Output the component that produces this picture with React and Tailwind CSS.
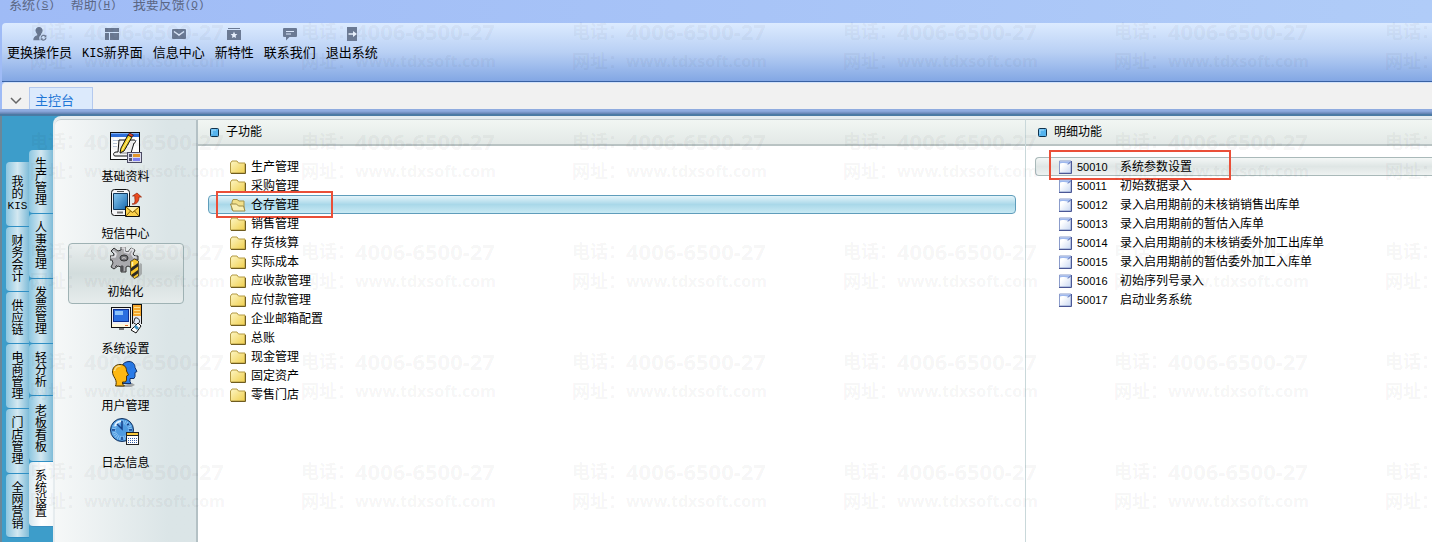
import { useState } from 'react'
import clsx from 'clsx'

const menus = [
  { label: '系统', hotkey: 'S' },
  { label: '帮助', hotkey: 'H' },
  { label: '我要反馈', hotkey: 'Q' },
]

const tools = [
  { label: '更换操作员', icon: UserIcon },
  { latin: 'KIS', label: '新界面', icon: LayoutIcon },
  { label: '信息中心', icon: MailIcon },
  { label: '新特性', icon: StarIcon },
  { label: '联系我们', icon: ChatIcon },
  { label: '退出系统', icon: ExitIcon },
]

const outerTabs = [
  { lines: ['我', '的', 'KIS'], size: 'h-[65px]' },
  { lines: [...'财务会计'], size: 'h-[65px]' },
  { lines: [...'供应链'], size: 'h-[52px]' },
  { lines: [...'电商管理'], size: 'h-[65px]' },
  { lines: [...'门店管理'], size: 'h-[65px]' },
  { lines: [...'全网营销'], size: 'h-[64px]' },
]

const innerTabs = [
  { lines: [...'生产管理'], size: 'h-[64px]' },
  { lines: [...'人事管理'], size: 'h-[65px]' },
  { lines: [...'发票管理'], size: 'h-[65px]' },
  { lines: [...'轻分析'], size: 'h-[52px]' },
  { lines: [...'老板看板'], size: 'h-[66px]' },
  { lines: [...'系统设置'], size: 'h-[65px]', active: true },
]

const modules = [
  { label: '基础资料', icon: MasterDataIcon },
  { label: '短信中心', icon: SmsIcon },
  { label: '初始化', icon: GearIcon },
  { label: '系统设置', icon: ComputerIcon },
  { label: '用户管理', icon: HeadsIcon },
  { label: '日志信息', icon: ClockIcon },
]

const subFunctions = [
  '生产管理',
  '采购管理',
  '仓存管理',
  '销售管理',
  '存货核算',
  '实际成本',
  '应收款管理',
  '应付款管理',
  '企业邮箱配置',
  '总账',
  '现金管理',
  '固定资产',
  '零售门店',
]

const details = [
  ['50010', '系统参数设置'],
  ['50011', '初始数据录入'],
  ['50012', '录入启用期前的未核销销售出库单'],
  ['50013', '录入启用期前的暂估入库单'],
  ['50014', '录入启用期前的未核销委外加工出库单'],
  ['50015', '录入启用期前的暂估委外加工入库单'],
  ['50016', '初始序列号录入'],
  ['50017', '启动业务系统'],
]

/* toolbar icons */

function UserIcon() {
  return (
    <svg width="14" height="14" viewBox="0 0 14 14" fill="#6b7a94">
      <path d="M6 0c2.200 0 3.600 1.500 3.600 3.600 0 1.500-.7 2.700-1.600 3.400v1c-1.300.7-2 2-1.800 3.600.1.7.3 1.100.6 1.600H.3c0-2.600 1-4 3.900-5v-1.200C3.300 6.300 2.500 5 2.500 3.600 2.500 1.500 3.900 0 6 0z" />
      <path d="M8.100 10.600a2.600 2.600 0 0 1 4.600-1.300M13 10.800a2.600 2.600 0 0 1-4.600 1.400" fill="none" stroke="#6b7a94" strokeWidth="1.200" />
      <path d="M13.300 7.800v2.400h-2.300zM7.700 13.600v-2.400H10z" />
    </svg>
  )
}

function LayoutIcon() {
  return (
    <svg width="14" height="14" viewBox="0 0 14 14" fill="#6b7a94" shapeRendering="crispEdges">
      <path d="M0 1h14v4H0zM0 6h4v7H0zM5 6h9v7H5z" />
    </svg>
  )
}

function MailIcon() {
  return (
    <svg width="14" height="14" viewBox="0 0 14 14">
      <rect y="2" width="14" height="10" rx="1" fill="#6b7a94" />
      <path d="M2 4.500l5 3.500 5-3.500" fill="none" stroke="#dce8fb" strokeWidth="1.500" />
    </svg>
  )
}

function StarIcon() {
  return (
    <svg width="14" height="14" viewBox="0 0 14 14">
      <path d="M1 1h12v1H1zM0 3h14v10H0z" fill="#6b7a94" />
      <path d="M7 4.600l1 2.300 2.400.2-1.800 1.600.5 2.400L7 9.900l-2.100 1.200.5-2.400-1.800-1.600 2.400-.2z" fill="#e6effc" />
    </svg>
  )
}

function ChatIcon() {
  return (
    <svg width="14" height="14" viewBox="0 0 14 14">
      <path d="M1 1h12a1 1 0 0 1 1 1v7a1 1 0 0 1-1 1H6.500L3 13.500V10H1a1 1 0 0 1-1-1V2a1 1 0 0 1 1-1z" fill="#6b7a94" />
      <path d="M3 4.500h8M3 7h5" stroke="#dce8fb" strokeWidth="1" />
    </svg>
  )
}

function ExitIcon() {
  return (
    <svg width="14" height="14" viewBox="0 0 14 14">
      <path d="M2 0h10v14H2z" fill="#6b7a94" />
      <path d="M3.500 6.300H8V4l4 3-4 3V7.700H3.500z" fill="#e6effc" />
    </svg>
  )
}

/* module icons */

function MasterDataIcon() {
  return (
    <svg width="32" height="32" viewBox="0 0 32 32">
      <g shapeRendering="crispEdges">
        <path d="M0 0h30v28H0z" fill="#111" />
        <path d="M1 1h28v4H1z" fill="#2f6fd8" />
        <path d="M1 1h28v1H1z" fill="#7eb0f3" />
        <path d="M1 5h28v22H1z" fill="#fff" />
        <path d="M3 8h24M3 11h4M3 14h4" stroke="#b9c4d6" />
      </g>
      <path d="M9 8h15c2 0 2 3 0 3l-3 10c0 2-2 3-4 3H5c-2 0-2-4 1-4h2z" fill="#f3f3f3" stroke="#111" />
      <path d="M13 12h6M12 15h5M10 21h8" stroke="#888" />
      <path d="M18 3l4 2-8 14-4 2 1-5z" fill="#f9d51c" stroke="#111" />
      <path d="M18 3l1.500-2 4 2L22 5z" fill="#e2402e" stroke="#111" strokeWidth=".6" />
      <path d="M19.500 5.500L12 18" stroke="#fff3a0" />
      <g shapeRendering="crispEdges">
        <path d="M17 20h15v11H17z" fill="#4b4b63" />
        <path d="M18 21h13v9H18z" fill="#dcdcec" />
        <path d="M19 22h3v3h-3zM19 26h3v3h-3z" fill="#55566e" />
        <path d="M23 22h7v3h-7z" fill="#e3962b" />
        <path d="M23 26h7v3h-7z" fill="#7f7ff0" />
      </g>
    </svg>
  )
}

function SmsIcon() {
  return (
    <svg width="32" height="32" viewBox="0 0 32 32">
      <defs>
        <linearGradient id="screen" x1="0" y1="0" x2="1" y2="1">
          <stop offset="0" stopColor="#8ccbf2" />
          <stop offset="1" stopColor="#1667ac" />
        </linearGradient>
      </defs>
      <rect x="1.500" y=".5" width="18" height="26" rx="3" fill="#f4f5f7" stroke="#111" />
      <path d="M7 2.500h7" stroke="#555" />
      <path d="M3.500 4.500h14v16h-14z" fill="url(#screen)" stroke="#123a5e" />
      <path d="M7 23.500h6" stroke="#777" strokeWidth="2" />
      <path d="M22 15c5 0 2-6 3-8h-2.500L27 4l4.500 4H29c0 4-2 8-7 7z" fill="#ea4a1e" stroke="#8f2209" strokeWidth=".7" />
      <path d="M15.500 17.500h14v10h-14z" fill="#fbd24b" stroke="#111" />
      <path d="M16 18l6.500 5.500L29 18M16 27l4.500-5M29 27l-4.500-5" fill="none" stroke="#7b5b09" />
      <path d="M17 18h11l-5.500 4.500z" fill="#fff2b0" />
    </svg>
  )
}

function GearIcon() {
  return (
    <svg width="32" height="32" viewBox="0 0 32 32">
      <path
        d="M11 0h4v4l3 1 3-4 4 2-2 4 2 2h3v4h-4l-1 3 2 3-3 2-4-2-2 1v5h-5v-5l-3-1-4 3-3-2 2-4-1-3H0V9h3l1-2-3-3 3-3 4 3 3-1z"
        fill="#aaaaae"
        stroke="#333"
      />
      <path d="M11.500 1h3v4l4 1 3-4 2 1-2 4 2 3h3M1 10h4l1-3-3-3" fill="none" stroke="#e4e4e8" strokeWidth="1.500" />
      <path d="M11 19h2v5h-2zM5 20l2-2" fill="#58585c" stroke="#4c4c50" />
      <ellipse cx="14" cy="11" rx="4" ry="3" fill="#77777c" stroke="#333" />
      <path d="M12 11.500c1-1 3-1 4 0" stroke="#ddd" fill="none" />
      <path d="M24 31l6-15 2 1v10l-4 4z" fill="#777" opacity=".5" />
      <path d="M20.500 14.500l4-2.500 4 2V29l-4 2.500-4-3.500z" fill="#f7c62d" stroke="#3c3315" strokeWidth=".8" />
      <path d="M21 21l7-5v3.500l-7 5zM21 28l7-5v3.500l-5 3.500z" fill="#2c2a25" />
      <path d="M22.500 15v4" stroke="#fff3b5" strokeWidth="1.500" />
    </svg>
  )
}

function ComputerIcon() {
  return (
    <svg width="32" height="32" viewBox="0 0 32 32">
      <g shapeRendering="crispEdges">
        <path d="M22 0h10v20H22z" fill="#111" />
        <path d="M23 1h8v11h-8z" fill="#f5a82d" />
        <path d="M24 3h6M24 6h6M24 9h6" stroke="#ffe08a" strokeWidth="1" />
        <path d="M23 12h8v8h-8z" fill="#e6e8ee" />
        <path d="M1 3h20v21H1z" fill="#111" />
        <path d="M2 4h18v16H2z" fill="#f0f1f4" />
        <path d="M3 5h16v13H3z" fill="#0d2f91" />
        <path d="M4 6h14v11H4z" fill="#2b6fe0" />
        <path d="M5 7h8v4H5z" fill="#8cc2fb" />
        <path d="M2 20h18v3H2z" fill="#fff8dc" />
        <path d="M15 21h3v1h-3z" fill="#e2682c" />
        <path d="M9 24h5v2H9z" fill="#777" />
      </g>
      <path d="M25 14a3.500 3.500 0 0 1 4.500 4l-2 3-4-2z" fill="#dfeaf8" stroke="#333" />
      <path d="M28 19l3 3-5 7-5-3z" fill="#fff" stroke="#111" />
      <path d="M26 21l3 3-2 2-3-3z" fill="#3a8fc0" />
    </svg>
  )
}

function HeadsIcon() {
  return (
    <svg width="32" height="32" viewBox="0 0 32 32">
      <path d="M6 26h15l4-2-3-2" fill="#777" opacity=".6" />
      <path d="M12 5c1-3 4-4.500 7-4.500 4 0 6 3 6 6l2 4-2 1v4l-1 2h-4v3l1 2h-9z" fill="#2a7be8" stroke="#10336f" />
      <path d="M2.500 11c0-4.500 3-7.500 7.500-7.500s6.500 2.500 6.500 6.500l2 4-2 1v4l-1 2h-3v2l2 2H5.500c1-2 1-5-.5-7.500S2.500 13 2.500 11z" fill="#fdb813" stroke="#4a3404" />
      <path d="M4.500 10c.5-3 2.500-5 6-5" stroke="#ffe08a" fill="none" strokeWidth="1.500" />
    </svg>
  )
}

function ClockIcon() {
  return (
    <svg width="32" height="32" viewBox="0 0 32 32">
      <circle cx="12" cy="12" r="11.500" fill="#4f9be0" stroke="#12305c" />
      <circle cx="12" cy="12" r="8" fill="none" stroke="#8cc4f3" strokeWidth="4" strokeDasharray="1 1" />
      <path d="M5 8c1-3 3-4.500 6-5" stroke="#e3f2ff" strokeWidth="2" fill="none" />
      <path d="M12 3v8L7 6M2 12h3M19 12h3M12 19v3M17 7l2-1" stroke="#15408a" strokeWidth="1.500" fill="none" />
      <g shapeRendering="crispEdges">
        <path d="M16 14h13v13H16z" fill="#222" />
        <path d="M17 15h11v2H17z" fill="#f8c83c" />
        <path d="M17 18h11v8H17z" fill="#fff" />
        <path d="M18 20h9M18 22h9M18 24h9" stroke="#345ea6" strokeDasharray="1 1" />
      </g>
    </svg>
  )
}

function FolderIcon({ open }) {
  if (open) {
    return (
      <svg width="16" height="14" viewBox="0 0 16 14">
        <path d="M2 12V4l1-2.500h4L9 3h5v9z" fill="#f1e08a" stroke="#a3934a" />
        <path d="M.5 6h6l2 2h5l1.500 5H3z" fill="#f8efb4" stroke="#9a8a45" />
      </svg>
    )
  }
  return (
    <svg width="16" height="14" viewBox="0 0 16 14">
      <defs>
        <linearGradient id="folder" x1="0" y1="0" x2="1" y2="1">
          <stop offset="0" stopColor="#fdf6c4" />
          <stop offset="1" stopColor="#f0cf4e" />
        </linearGradient>
      </defs>
      <path d="M.5 13V3L2 1h5l1.500 2H15v10z" fill="url(#folder)" stroke="#b39a45" />
      <path d="M15.500 4v9.500H1" fill="none" stroke="#6f5c20" />
    </svg>
  )
}

function DocIcon() {
  return (
    <svg width="13" height="14" viewBox="0 0 13 14">
      <defs>
        <linearGradient id="doc" x1="0" y1="0" x2="1" y2="1">
          <stop offset=".3" stopColor="#fff" />
          <stop offset="1" stopColor="#c9d8f2" />
        </linearGradient>
      </defs>
      <path d="M.5 1h11.500v12H.5z" fill="url(#doc)" stroke="#8b9ccb" />
      <path d="M1 1.500h11L9.500 4C7 2.800 4 2.800 1 3.500z" fill="#9db8ee" />
      <path d="M12.500 1v12.500H0" fill="none" stroke="#4a5795" />
      <path d="M12 1.500L9 4.500" stroke="#4a5fa8" />
    </svg>
  )
}

function Marker() {
  return (
    <svg width="9" height="9" viewBox="0 0 9 9">
      <rect x=".5" y=".5" width="8" height="8" rx="1" fill="#56b4ee" stroke="#10324c" />
      <path d="M2 6V2h4" fill="none" stroke="#a5dcfb" />
    </svg>
  )
}

function VerticalTab({ lines, size, active }) {
  return (
    <button
      className={clsx(
        'flex w-full flex-col items-center justify-center rounded-l border-b text-xs leading-[12px]',
        size,
        active
          ? 'border-[#3a8fc0] bg-linear-to-r from-[#d5e6ee] via-white to-[#f6f9fa]'
          : 'border-[#2f8fc4] bg-linear-to-r from-[#8cc6e0] via-[#d3e8f1] to-[#7fbcd8]',
      )}
    >
      {lines.map((line, i) => (
        <span key={i} className={line.length > 1 ? "font-['Liberation_Mono',monospace] text-[11px]" : undefined}>
          {line}
        </span>
      ))}
    </button>
  )
}

function PanelHeader({ children }) {
  return (
    <h2 className="flex h-[26px] items-center gap-[7px] border-b-2 border-[#b9c3c3] bg-linear-to-b from-[#f1f6f3] to-[#e3e9e7] pl-3 text-xs">
      <Marker />
      {children}
    </h2>
  )
}

function Watermark() {
  return (
    <div
      aria-hidden="true"
      className="pointer-events-none absolute inset-x-0 top-[16px] bottom-0 overflow-hidden pl-[30px] font-['Noto_Sans','Noto_Sans_CJK_SC',sans-serif] font-bold text-black/5"
    >
      {[0, 1, 2, 3, 4].map((row) => (
        <div key={row} className="flex h-[110px] w-max">
          {[0, 1, 2, 3, 4, 5].map((col) => (
            <div key={col} className="w-[271px] text-lg leading-[30px] whitespace-nowrap">
              <p className="flex">
                <span className="w-[54px]">电话：</span>
                <span className="text-[22px]">4006-6500-27</span>
              </p>
              <p className="flex">
                <span className="w-[54px]">网址：</span>
                <span className="text-base leading-[30px]">www.tdxsoft.com</span>
              </p>
            </div>
          ))}
        </div>
      ))}
    </div>
  )
}

export default function App() {
  const [module, setModule] = useState('初始化')
  const [sub, setSub] = useState('仓存管理')
  const [detail, setDetail] = useState('50010')

  return (
    <div className="relative flex min-h-screen flex-col overflow-hidden bg-linear-to-r from-[#9fbbf6] to-[#b0ccf8] font-['Liberation_Sans','Noto_Sans_CJK_SC',sans-serif] text-xs text-black">
      <nav className="flex h-[23px] items-start gap-4 pl-[9px] text-[13px] leading-[10px] text-[#5b6785]">
        {menus.map((menu) => (
          <button key={menu.label} className="flex">
            {menu.label}
            <span className="font-['Liberation_Mono',monospace] text-[11px]">
              (<u>{menu.hotkey}</u>)
            </span>
          </button>
        ))}
      </nav>

      <div className="ml-[2px] flex h-[59px] items-start gap-[10px] rounded-tl border-b border-[#3a62a3] bg-linear-to-b from-[#dcebff] via-[#b9d0f4] to-[#83a7e4] pt-1 pl-[5px]">
        {tools.map(({ latin, label, icon: Icon }) => (
          <button key={label} className="flex flex-col items-center gap-1 text-[13px] leading-[16px]">
            <Icon />
            <span>
              {latin && <span className="font-['Liberation_Mono',monospace] text-xs">{latin}</span>}
              {label}
            </span>
          </button>
        ))}
      </div>

      <div className="ml-[2px] flex h-[27px] items-end rounded-tl border-t border-[#d3e3fc] bg-[#f1f1f1]">
        <button aria-label="展开" className="flex h-[21px] w-[27px] items-center justify-center pt-1">
          <svg width="12" height="8" viewBox="0 0 12 8">
            <path d="M1 1l5 5 5-5" fill="none" stroke="#666" strokeWidth="1.500" />
          </svg>
        </button>
        <button className="flex h-[22px] w-16 items-center border border-b-0 border-[#b4c9ee] bg-[#dceafc] pt-1 pl-[5px] text-[13px] leading-[16px] text-[#1f76d6]">
          主控台
        </button>
      </div>
      <div className="h-[7px] border-b-2 border-[#4b7aa4] bg-linear-to-b from-[#8fabdf] from-40% to-[#5f7fae]" />

      <main className="flex flex-1 border-l-2 border-[#6b8799] bg-[#3d9dca]">
        <div className="mt-[46px] ml-1 w-[23px] shrink-0 pb-1">
          {outerTabs.map((tab) => (
            <VerticalTab key={tab.lines.join('')} {...tab} />
          ))}
        </div>
        <div className="mt-[34px] w-6 shrink-0">
          {innerTabs.map((tab) => (
            <VerticalTab key={tab.lines.join('')} {...tab} />
          ))}
        </div>

        <div className="flex min-w-0 flex-1 rounded-tl-lg border-t-[3px] border-l-2 border-[#e6ecef] bg-white">
          <aside className="flex w-[143px] shrink-0 flex-col items-center rounded-tl-md border-t border-r-2 border-t-[#c5cdd0] border-r-[#b4c1c5] bg-linear-to-r from-[#f6f8f8] to-[#dbe5e7] to-80% pt-[9px]">
            {modules.map(({ label, icon: Icon }) => (
              <button
                key={label}
                onClick={() => setModule(label)}
                className={clsx(
                  'flex w-[116px] flex-col items-center gap-[7px] pt-[3px] leading-[12px]',
                  module === label
                    ? '-mb-[3px] h-[61px] rounded-sm border border-[#9fb2b4] bg-linear-to-b from-[#e9eeee] via-[#d3dddd] to-[#e6ecec]'
                    : 'h-[57px]',
                )}
              >
                <Icon />
                {label}
              </button>
            ))}
          </aside>

          <section className="min-w-0 flex-1 border-t border-r border-t-[#c5cdd0] border-r-[#c9d8da]">
            <PanelHeader>子功能</PanelHeader>
            <ul className="mt-[11px] mr-[9px] ml-[10px]">
              {subFunctions.map((name) => (
                <li key={name} className="relative">
                  <button
                    onClick={() => setSub(name)}
                    className={clsx(
                      'flex h-[19px] w-full items-center gap-[5px] border pl-[21px] leading-[16px]',
                      sub === name
                        ? 'rounded-sm border-[#5f9dbb] bg-linear-to-b from-[#e4f4fa] via-[#a9d8e9] to-[#c9eaf4]'
                        : 'border-transparent',
                    )}
                  >
                    <FolderIcon open={sub === name} />
                    {name}
                  </button>
                  {sub === name && (
                    <span className="pointer-events-none absolute -top-1 left-2 h-[27px] w-[117px] border-2 border-[#ea4f38]" />
                  )}
                </li>
              ))}
            </ul>
          </section>

          <section className="w-[406px] shrink-0 border-t border-[#c5cdd0]">
            <PanelHeader>明细功能</PanelHeader>
            <ul className="mt-[11px] ml-[9px]">
              {details.map(([code, name]) => (
                <li key={code} className="relative">
                  <button
                    onClick={() => setDetail(code)}
                    className={clsx(
                      'flex h-[19px] w-full items-center border border-r-0 pl-[23px] leading-[16px] whitespace-nowrap',
                      detail === code
                        ? 'rounded-l-sm border-[#a9b9b9] bg-linear-to-b from-[#f4f7f6] via-[#dfe6e5] to-[#eef2f1]'
                        : 'border-transparent',
                    )}
                  >
                    <DocIcon />
                    <span className="ml-[5px] w-[43px] text-left text-[11px]">{code}</span>
                    {name}
                  </button>
                  {detail === code && (
                    <span className="pointer-events-none absolute -top-[7px] left-[14px] h-[30px] w-[182px] border-2 border-[#ea4f38]" />
                  )}
                </li>
              ))}
            </ul>
          </section>
        </div>
      </main>

      <Watermark />
    </div>
  )
}
